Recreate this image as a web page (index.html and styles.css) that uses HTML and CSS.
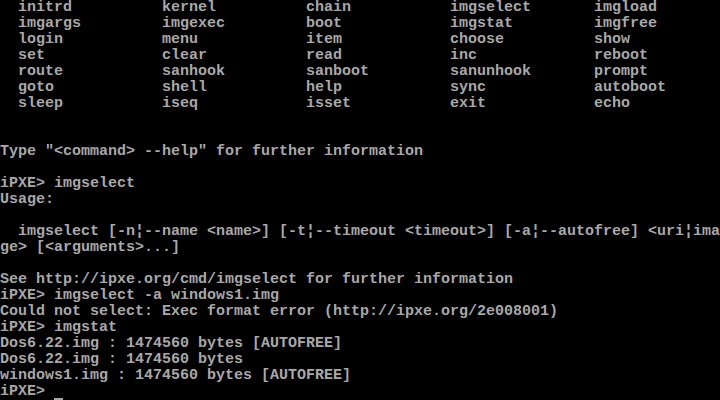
FILE: index.html
```html
<!DOCTYPE html>
<html lang="en">
<head>
<meta charset="utf-8">
<title>iPXE console</title>
<link rel="stylesheet" href="styles.css">
</head>
<body>
<main class="console">
  <ul class="cmds">
    <li>initrd</li><li>kernel</li><li>chain</li><li>imgselect</li><li>imgload</li>
    <li>imgargs</li><li>imgexec</li><li>boot</li><li>imgstat</li><li>imgfree</li>
    <li>login</li><li>menu</li><li>item</li><li>choose</li><li>show</li>
    <li>set</li><li>clear</li><li>read</li><li>inc</li><li>reboot</li>
    <li>route</li><li>sanhook</li><li>sanboot</li><li>sanunhook</li><li>prompt</li>
    <li>goto</li><li>shell</li><li>help</li><li>sync</li><li>autoboot</li>
    <li>sleep</li><li>iseq</li><li>isset</li><li>exit</li><li>echo</li>
  </ul>
<pre class="out">


Type "&lt;command&gt; --help" for further information

iPXE&gt; imgselect
Usage:

  imgselect [-n¦--name &lt;name&gt;] [-t¦--timeout &lt;timeout&gt;] [-a¦--autofree] &lt;uri¦ima
ge&gt; [&lt;arguments&gt;...]

See http://ipxe.org/cmd/imgselect for further information
iPXE&gt; imgselect -a windows1.img
Could not select: Exec format error (http://ipxe.org/2e008001)
iPXE&gt; imgstat
Dos6.22.img : 1474560 bytes [AUTOFREE]
Dos6.22.img : 1474560 bytes
windows1.img : 1474560 bytes [AUTOFREE]
iPXE&gt; <span class="cursor"> </span></pre>
</main>
</body>
</html>
```
FILE: styles.css
```css
html, body {
  margin: 0;
  padding: 0;
  background: #000;
}
body {
  width: 720px;
  height: 400px;
  overflow: hidden;
}
.console {
  color: #a8a8a8;
  font-family: "Liberation Mono", "DejaVu Sans Mono", monospace;
  font-size: 15px;
  line-height: 16px;
  font-weight: bold;
}
.cmds {
  list-style: none;
  margin: 0;
  padding: 0 0 0 18px;
  display: grid;
  grid-template-columns: repeat(5, 144px);
}
.cmds li {
  height: 16px;
  white-space: pre;
}
.out {
  margin: 0;
  font: inherit;
  white-space: pre;
}
.cursor {
  display: inline-block;
  width: 9px;
  height: 16px;
  vertical-align: top;
  box-sizing: border-box;
  border-bottom: 2px solid #a8a8a8;
  margin-top: 0;
}
```
